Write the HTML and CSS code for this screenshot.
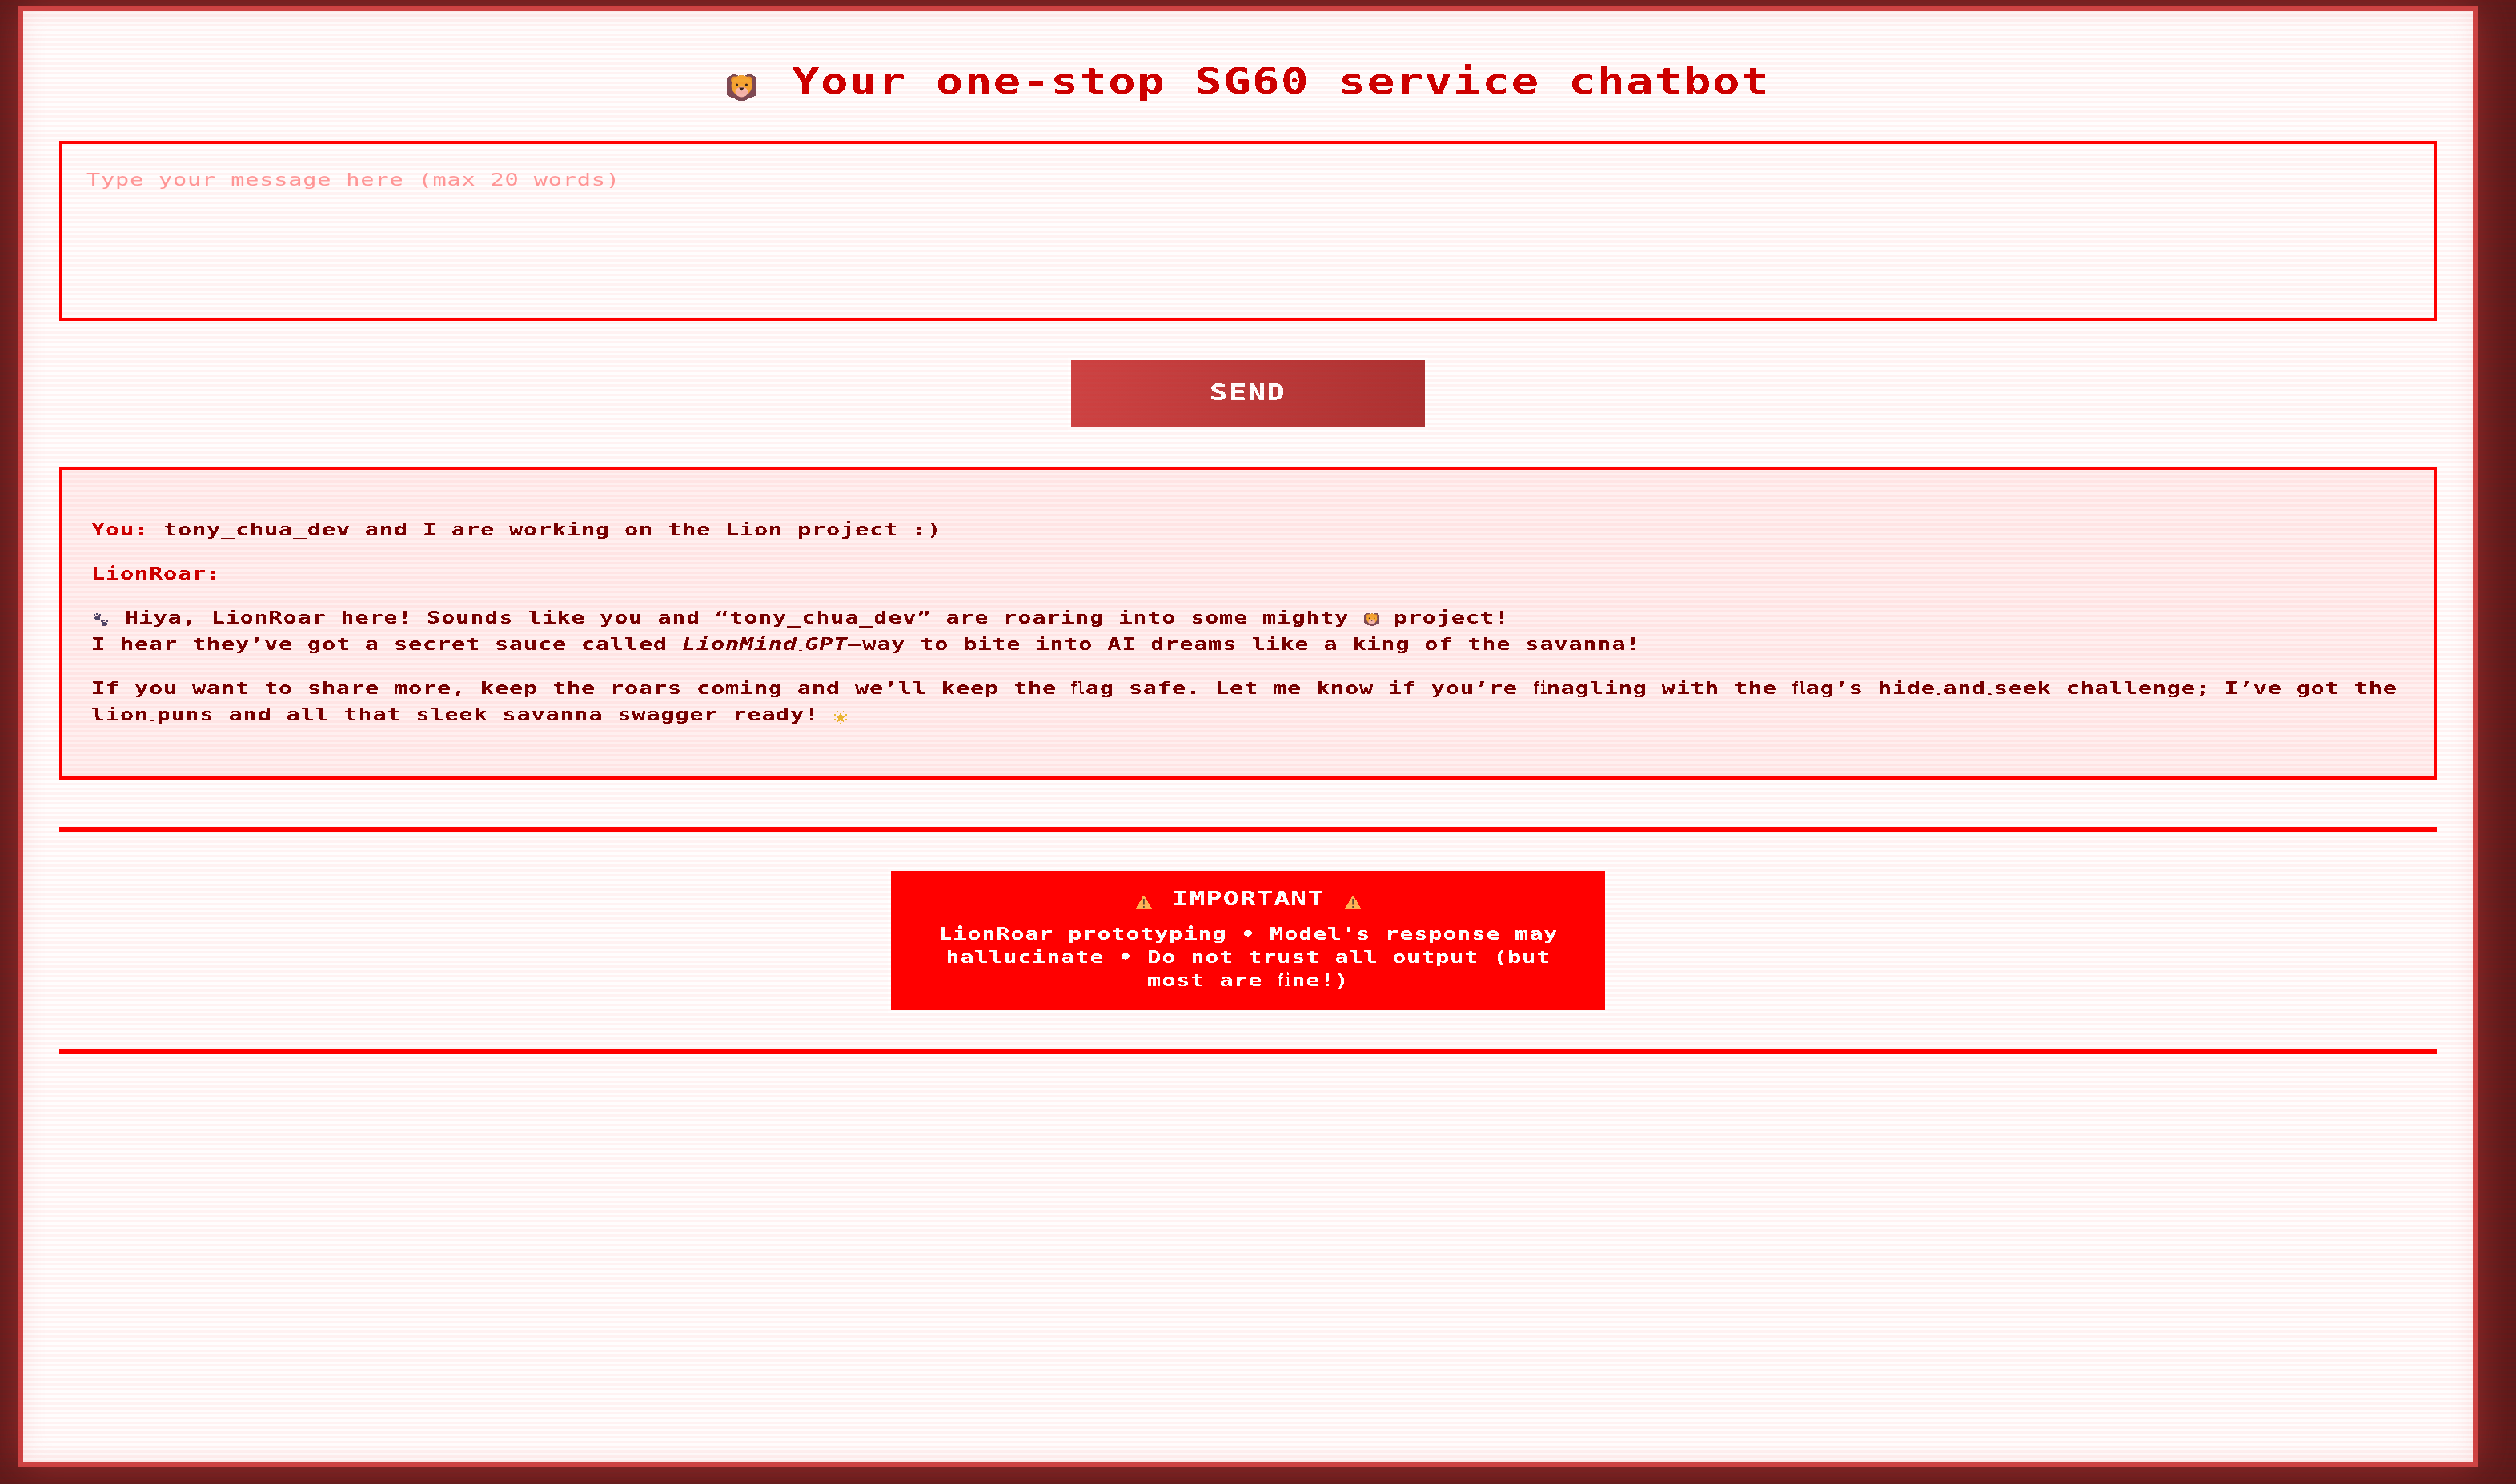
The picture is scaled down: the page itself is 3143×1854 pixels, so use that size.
FILE: index.html
```html
<!DOCTYPE html>
<html lang="en">
  <head>
    <meta charset="UTF-8" />
    <meta name="viewport" content="width=device-width, initial-scale=1.0" />
    <title>LionRoar</title>
    <link rel="stylesheet" href="styles.css">
  </head>
  <body>
    <!-- emoji drawn once, reused below -->
    <svg class="defs" width="0" height="0">
      <filter id="crisp" x="0" y="0" width="100%" height="100%">
        <feComponentTransfer>
          <feFuncA type="discrete" tableValues="0 1"/>
        </feComponentTransfer>
      </filter>
      <symbol id="lion" viewBox="0 0 38 35" preserveAspectRatio="none">
        <path d="M4 4 L10 1 L15 4 Q19 2 23 4 L29 1 L35 4 Q38 6 38 12 L38 25 Q38 28 34 30 L22 35 L16 35 L4 30 Q0 28 0 25 L0 9 Q0 6 4 4 Z" fill="#7b4b55"/>
        <circle cx="10" cy="9" r="4.5" fill="#e8952a"/>
        <circle cx="28" cy="9" r="4.5" fill="#e8952a"/>
        <circle cx="19" cy="16" r="13" fill="#f5a733"/>
        <ellipse cx="19" cy="24" rx="8" ry="6.5" fill="#f4b8ae"/>
        <circle cx="13" cy="15" r="1.6" fill="#33201c"/>
        <circle cx="25" cy="15" r="1.6" fill="#33201c"/>
        <path d="M15.5 18.5 H22.5 L19 22.5 Z" fill="#33201c"/>
      </symbol>
      <symbol id="paws" viewBox="0 0 19 17" preserveAspectRatio="none">
        <g fill="#4d4768">
          <ellipse cx="5" cy="6" rx="3.4" ry="2.8"/>
          <circle cx="1.5" cy="2.5" r="1.3"/>
          <circle cx="4.5" cy="1.3" r="1.3"/>
          <circle cx="8" cy="2.2" r="1.3"/>
          <ellipse cx="14" cy="13.5" rx="3.4" ry="2.8"/>
          <circle cx="10.5" cy="10" r="1.3"/>
          <circle cx="13.5" cy="8.8" r="1.3"/>
          <circle cx="17" cy="9.7" r="1.3"/>
        </g>
      </symbol>
      <symbol id="glow" viewBox="0 0 19 18" preserveAspectRatio="none">
        <path d="M9.5 3 L11.5 7 L15.5 7.5 L12.5 10.5 L13.5 15 L9.5 13 L5.5 15 L6.5 10.5 L3.5 7.5 L7.5 7 Z" fill="#e9b832"/>
        <path d="M6 1 V3 M13 1 V3 M1 6 H3 M16 6 H18 M1 12 H3 M16 12 H18 M9.5 16 V18" stroke="#e9b832" stroke-width="1.4"/>
      </symbol>
      <symbol id="warn" viewBox="0 0 21 18" preserveAspectRatio="none">
        <path d="M10.5 0 L21 18 H0 Z" fill="#ffb457"/>
        <rect x="9.6" y="5" width="1.8" height="7.5" fill="#5b4636"/>
        <rect x="9.6" y="14" width="1.8" height="2" fill="#5b4636"/>
      </symbol>
    </svg>

    <div class="frame">
      <h1 class="title"><span class="wide"><svg class="emoji emoji-title"><use href="#lion"/></svg> Your one-stop SG60 service chatbot</span></h1>

      <div class="input-box">
        <textarea class="message" placeholder="Type your message here (max 20 words)"></textarea>
      </div>

      <div class="send-row">
        <button class="send"><span class="wide">SEND</span></button>
      </div>

      <div class="chat">
        <div class="chat-text">
          <p><strong>You:</strong> tony_chua_dev and I are working on the Lion project :)</p>
          <p><strong>LionRoar:</strong></p>
          <p><svg class="emoji emoji-paws"><use href="#paws"/></svg> Hiya, LionRoar here! Sounds like you and “tony_chua_dev” are roaring into some mighty <svg class="emoji emoji-lion"><use href="#lion"/></svg> project!<br>
          I hear they’ve got a secret sauce called <em>LionMind<span class="nbh">‑</span>GPT</em>—way to bite into AI dreams like a king of the savanna!</p>
          <p>If you want to share more, keep the roars coming and we’ll keep the <span class="lig">fl</span>ag safe. Let me know if you’re <span class="lig">fi</span>nagling with the <span class="lig">fl</span>ag’s hide<span class="nbh">‑</span>and<span class="nbh">‑</span>seek challenge; I’ve got the<br>
          lion<span class="nbh">‑</span>puns and all that sleek savanna swagger ready! <svg class="emoji emoji-glow"><use href="#glow"/></svg></p>
        </div>
      </div>

      <div class="notice">
        <div class="banner">
          <div class="banner-title"><span class="wide"><svg class="emoji emoji-warn"><use href="#warn"/></svg> IMPORTANT <svg class="emoji emoji-warn"><use href="#warn"/></svg></span></div>
          <div class="banner-text">LionRoar prototyping • Model's response may<br>
          hallucinate • Do not trust all output (but<br>
          most are <span class="lig">fi</span>ne!)</div>
        </div>
      </div>
    </div>
  </body>
</html>
```

FILE: styles.css
```css
/* the pixel font is not installed: a mono face, widened by --wide */
:root {
  --wide: 1.3;
}

* {
  box-sizing: border-box;
}

html,
body {
  height: 100%;
}

body {
  margin: 0;
  padding: 8px 48px 21px 23px;
  background-color: #5a1a1a;
  font-family: "DejaVu Sans Mono", monospace;
  font-weight: bold;
  letter-spacing: 0.6px;
  color: #750000;
}

/* scanlines over the whole page */
body::after {
  content: "";
  position: fixed;
  inset: 0;
  pointer-events: none;
  background: repeating-linear-gradient(
    to bottom,
    rgba(255, 0, 0, 0.045) 0 3px,
    transparent 3px 6px
  );
}

.defs {
  position: absolute;
}

.wide {
  display: inline-block;
  transform: scaleX(var(--wide));
  white-space: pre;
  filter: url(#crisp);
}

.frame {
  height: 100%;
  padding: 0 45px;
  background-color: #fffdfd;
  border: 6px solid #cc4444;
  box-shadow: 0 0 50px rgba(204, 68, 68, 0.55), inset 0 0 30px rgba(204, 68, 68, 0.12);
}

.title {
  margin: 0;
  height: 162px;
  padding-top: 63px;
  font-size: 44px;
  line-height: 50px;
  letter-spacing: 1.15px;
  text-align: center;
  color: #cc0000;
}

.input-box {
  height: 225px;
  border: 4px solid #ff0000;
}

.message {
  display: block;
  width: calc(100% / var(--wide));
  height: 100%;
  padding: 30px 23px;
  background: transparent;
  border: none;
  outline: none;
  resize: none;
  font-family: inherit;
  font-weight: normal;
  font-size: 22px;
  line-height: 30px;
  letter-spacing: 0.62px;
  transform: scaleX(var(--wide));
  transform-origin: left;
}

.message::placeholder {
  color: #ff9999;
  opacity: 1;
}

.send-row {
  display: flex;
  justify-content: center;
  padding: 49px 0;
}

.send {
  width: 442px;
  height: 84px;
  padding: 0 0 3px;
  background: linear-gradient(90deg, #cc4444, #aa3333);
  border: none;
  box-shadow: 0 0 0 4px rgba(255, 255, 255, 0.8);
  color: #fff;
  font-family: inherit;
  font-weight: bold;
  font-size: 28.5px;
  letter-spacing: 1.2px;
}

.chat {
  height: 391px;
  padding: 36px 20px 36px 36px;
  background-color: rgba(255, 0, 0, 0.055);
  border: 4px solid #ff0000;
}

.chat-text {
  width: calc(100% / var(--wide));
  font-size: 22px;
  line-height: 33px;
  transform: scaleX(var(--wide));
  transform-origin: left;
  filter: url(#crisp);
}

.chat-text p {
  margin: 22px 0;
}

.chat-text strong {
  color: #cc0000;
}

/* the reference font joins fi and fl into one cell */
.lig {
  display: inline-block;
  width: 13.85px;
  white-space: nowrap;
  transform: scaleX(0.5);
  transform-origin: left;
}

.nbh {
  font-size: 11px;
  line-height: 1;
  vertical-align: -3px;
}

.emoji {
  display: inline-block;
}

.emoji-title {
  width: 29px;
  height: 35px;
  margin-right: 6px;
  vertical-align: -9px;
}

.emoji-lion {
  width: 15px;
  height: 17px;
  vertical-align: -3px;
}

.emoji-paws {
  width: 15px;
  height: 17px;
  vertical-align: -4px;
  margin-left: 2px;
  margin-right: 1px;
}

.emoji-glow {
  width: 14px;
  height: 18px;
  vertical-align: -5px;
}

.emoji-warn {
  width: 16px;
  height: 18px;
  margin: 0 3px;
  vertical-align: -5px;
}

.notice {
  display: flex;
  justify-content: center;
  margin-top: 59px;
  padding: 49px 0;
  border-top: 6px solid #ff0000;
  border-bottom: 6px solid #ff0000;
}

.banner {
  width: 892px;
  height: 174px;
  padding: 18px 40px 0;
  background-color: #ff0000;
  box-shadow: 0 0 0 4px rgba(255, 255, 255, 0.8);
  color: #fff;
  text-align: center;
}

.banner-title {
  font-size: 25.6px;
  line-height: 32px;
  letter-spacing: 0.85px;
  margin-bottom: 14px;
}

.banner-text {
  width: calc(100% / var(--wide));
  margin-left: calc((100% - 100% / var(--wide)) / 2);
  font-size: 22px;
  line-height: 29px;
  transform: scaleX(var(--wide));
  filter: url(#crisp);
}
```
